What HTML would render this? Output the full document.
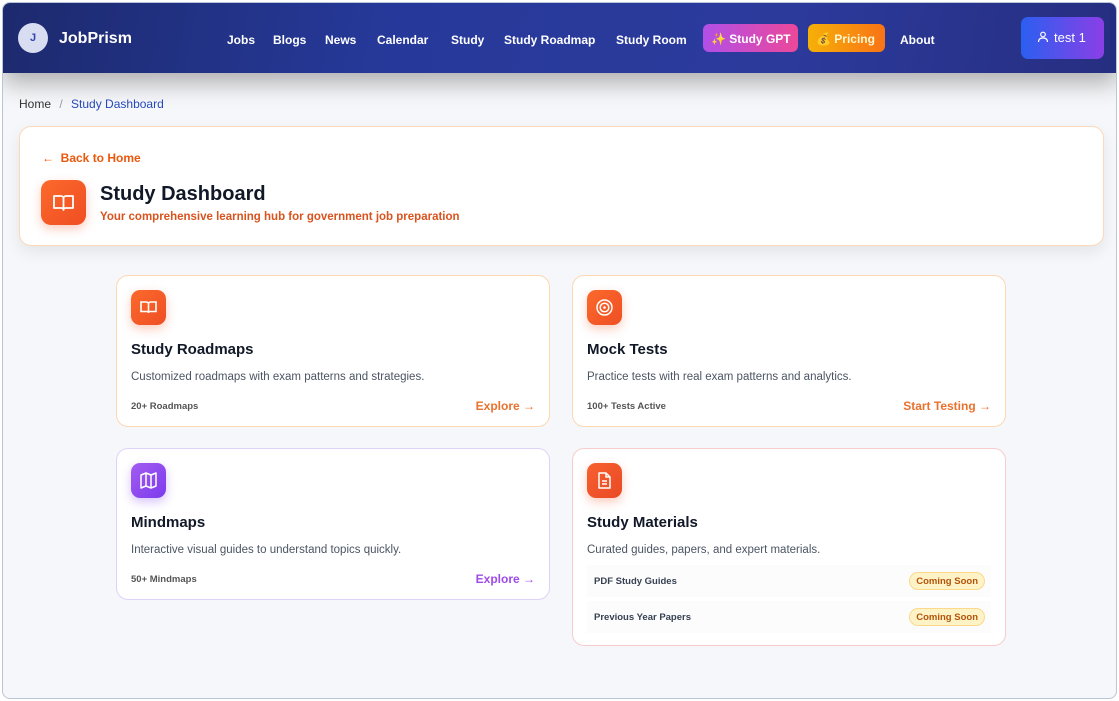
<!DOCTYPE html>
<html><head><meta charset="utf-8"><style>
*{box-sizing:border-box;margin:0;padding:0}
body{width:1119px;height:701px;overflow:hidden;font-family:"Liberation Sans",sans-serif;background:#fff;position:relative}
.frame{position:absolute;left:2px;top:2px;width:1115px;height:697px;border:1px solid #b9c6d8;border-radius:8px;background:#f6f7fa;overflow:hidden}
.hdr{position:absolute;left:0;top:0;width:1115px;height:70px;background:linear-gradient(100deg,#1d2a6e 0%,#26399a 35%,#2c3a9c 70%,#262e80 100%);box-shadow:0 10px 24px rgba(0,0,0,.3)}
.a{position:absolute;color:#fff;font-weight:bold;font-size:12px;white-space:nowrap}
.card{position:absolute;background:#fff;border-radius:12px}
.ic{position:absolute;width:35px;height:35px;border-radius:9px;box-shadow:0 4px 10px rgba(240,90,40,.3)}
.t{position:absolute;font-weight:bold;font-size:15px;color:#111827}
.d{position:absolute;font-size:11.5px;color:#4b5563}
.s{position:absolute;font-size:9.5px;color:#555;font-weight:bold}
.l{position:absolute;font-size:12px;font-weight:bold}
.row{position:absolute;left:14px;right:14px;height:32px;background:#fcfcfd;font-size:9.5px;font-weight:bold;color:#374151;padding:11px 7px}
.badge{position:absolute;right:6px;top:7px;height:18px;padding:3px 6px;background:#fef3c7;border:1px solid #fcd98a;border-radius:9px;color:#b45309;font-size:9.5px;font-weight:bold}
</style></head><body><div class="frame">
<div class="hdr">
<div style="position:absolute;left:15px;top:20px;width:30px;height:30px;border-radius:50%;background:#d9ddf2;color:#3346b0;font-weight:bold;font-size:11px;text-align:center;line-height:30px">J</div>
<div class="a" style="left:56px;top:27px;font-size:16px">JobPrism</div>
<div class="a" style="left:224px;top:30px">Jobs</div>
<div class="a" style="left:270px;top:30px">Blogs</div>
<div class="a" style="left:322px;top:30px">News</div>
<div class="a" style="left:374px;top:30px">Calendar</div>
<div class="a" style="left:448px;top:30px">Study</div>
<div class="a" style="left:501px;top:30px">Study Roadmap</div>
<div class="a" style="left:613px;top:30px">Study Room</div>
<div class="a" style="left:700px;top:21px;width:95px;height:28px;border-radius:6px;background:linear-gradient(90deg,#b24fe8,#ec4899);padding:8px 0 0 8px">✨ Study GPT</div>
<div class="a" style="left:805px;top:21px;width:77px;height:28px;border-radius:6px;background:linear-gradient(90deg,#f5b008,#f97316);padding:8px 0 0 8px;color:#fff7d0">💰 Pricing</div>
<div class="a" style="left:897px;top:30px">About</div>
<div style="position:absolute;left:1018px;top:14px;width:83px;height:42px;border-radius:7px;background:linear-gradient(90deg,#2b5ff0,#8a3fe6);color:#fff;font-size:13px;padding:13px 0 0 16px;white-space:nowrap">
<svg width="12" height="12" viewBox="0 0 12 12" style="vertical-align:-1px;margin-right:5px"><circle cx="6" cy="3.5" r="2.3" fill="none" stroke="#fff" stroke-width="1.2"/><path d="M1.5 11c0-3 2-4 4.5-4s4.5 1 4.5 4" fill="none" stroke="#fff" stroke-width="1.2"/></svg>test 1</div>
</div>
<div style="position:absolute;left:16px;top:94px;font-size:12px;color:#333">Home <span style="color:#999;margin:0 5px">/</span> <span style="color:#2548b8">Study Dashboard</span></div>
<div class="card" style="left:16px;top:123px;width:1085px;height:120px;border:1px solid #fcd9b8;box-shadow:0 6px 16px rgba(0,0,0,.08)">
<div style="position:absolute;left:22px;top:24px;font-size:12px;color:#ea580c;font-weight:bold">← &nbsp;Back to Home</div>
<div class="ic" style="left:21px;top:53px;width:45px;height:45px;border-radius:10px;background:linear-gradient(135deg,#fb6a2c,#f04d22)"><svg width="45" height="45" viewBox="0 0 45 45"><path d="M13 16h7a2.5 2.5 0 0 1 2.5 2.5V30a2 2 0 0 0-2-2H13zM32 16h-7a2.5 2.5 0 0 0-2.5 2.5V30a2 2 0 0 1 2-2H32z" fill="none" stroke="#fff" stroke-width="1.8" stroke-linejoin="round"/></svg></div>
<div class="t" style="left:80px;top:56px;font-size:20px">Study Dashboard</div>
<div style="position:absolute;left:80px;top:84px;font-size:11.5px;font-weight:bold;color:#d9531e">Your comprehensive learning hub for government job preparation</div>
</div>

<div class="card" style="left:113px;top:272px;width:434px;height:152px;border:1px solid #fdd8b0">
<div class="ic" style="left:14px;top:14px;background:linear-gradient(135deg,#fb6a2c,#ef4e23)"><svg width="35" height="35" viewBox="0 0 35 35"><path d="M10 12h5.5a2 2 0 0 1 2 2v9a1.5 1.5 0 0 0-1.5-1.5H10zM25 12h-5.5a2 2 0 0 0-2 2v9a1.5 1.5 0 0 1 1.5-1.5H25z" fill="none" stroke="#fff" stroke-width="1.6"/></svg></div>
<div class="t" style="left:14px;top:65px">Study Roadmaps</div>
<div class="d" style="left:14px;top:95px">Customized roadmaps with exam patterns and strategies.</div>
<div class="s" style="left:14px;top:125px">20+ Roadmaps</div>
<div class="l" style="right:14px;top:123px;color:#e8722e">Explore →</div>
</div>

<div class="card" style="left:569px;top:272px;width:434px;height:152px;border:1px solid #fdd8b0">
<div class="ic" style="left:14px;top:14px;background:linear-gradient(135deg,#fb6a2c,#ef4e23)"><svg width="35" height="35" viewBox="0 0 35 35"><circle cx="17.5" cy="17.5" r="7.5" fill="none" stroke="#fff" stroke-width="1.5"/><circle cx="17.5" cy="17.5" r="4.3" fill="none" stroke="#fff" stroke-width="1.5"/><circle cx="17.5" cy="17.5" r="1.3" fill="#fff"/></svg></div>
<div class="t" style="left:14px;top:65px">Mock Tests</div>
<div class="d" style="left:14px;top:95px">Practice tests with real exam patterns and analytics.</div>
<div class="s" style="left:14px;top:125px">100+ Tests Active</div>
<div class="l" style="right:14px;top:123px;color:#e8722e">Start Testing →</div>
</div>

<div class="card" style="left:113px;top:445px;width:434px;height:152px;border:1px solid #ddd3f8">
<div class="ic" style="left:14px;top:14px;background:linear-gradient(135deg,#a35cf0,#7c3aed);box-shadow:0 4px 10px rgba(124,58,237,.3)"><svg width="35" height="35" viewBox="0 0 35 35"><path d="M10 12l5-2 5 2 5-2v13l-5 2-5-2-5 2zM15 10v13M20 12v13" fill="none" stroke="#fff" stroke-width="1.5" stroke-linejoin="round"/></svg></div>
<div class="t" style="left:14px;top:65px">Mindmaps</div>
<div class="d" style="left:14px;top:95px">Interactive visual guides to understand topics quickly.</div>
<div class="s" style="left:14px;top:125px">50+ Mindmaps</div>
<div class="l" style="right:14px;top:123px;color:#9f4be8">Explore →</div>
</div>

<div class="card" style="left:569px;top:445px;width:434px;height:198px;border:1px solid #f8cccc">
<div class="ic" style="left:14px;top:14px;background:linear-gradient(135deg,#f76030,#ea4a24)"><svg width="35" height="35" viewBox="0 0 35 35"><path d="M12 10h7l4 4v11H12zM19 10v4h4M15 18h5M15 21h5" fill="none" stroke="#fff" stroke-width="1.5" stroke-linejoin="round"/></svg></div>
<div class="t" style="left:14px;top:65px">Study Materials</div>
<div class="d" style="left:14px;top:95px">Curated guides, papers, and expert materials.</div>
<div class="row" style="top:116px">PDF Study Guides<div class="badge">Coming Soon</div></div>
<div class="row" style="top:152px">Previous Year Papers<div class="badge">Coming Soon</div></div>
</div>
</div></body></html>
